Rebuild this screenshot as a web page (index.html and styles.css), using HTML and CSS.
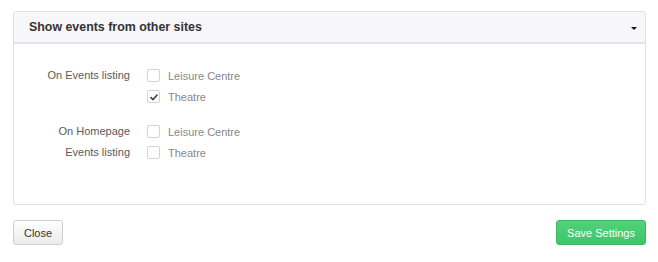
FILE: index.html
```html
<!DOCTYPE html>
<html lang="en">
<head>
    <meta charset="UTF-8">
    <title>Event Settings</title>
    <link rel="stylesheet" href="styles.css">
</head>
<body>

<div class="settings">
    <!-- Panel -->
    <div class="panel">
        <div class="panel-heading">
            <h3>Show events from other sites</h3>
            <span class="caret"></span>
        </div>
        <div class="panel-body">
            <div class="form-group">
                <div class="group-label">On Events listing</div>
                <div class="options">
                    <label class="option"><span class="box"></span>Leisure Centre</label>
                    <label class="option"><span class="box checked">
                        <svg width="10" height="10" viewBox="0 0 10 10"><path d="M1.5 5.2 L4 7.5 L8.5 2.5" fill="none" stroke="#444" stroke-width="1.6"/></svg>
                    </span>Theatre</label>
                </div>
            </div>
            <div class="form-group">
                <div class="group-label">On Homepage<br>Events listing</div>
                <div class="options">
                    <label class="option"><span class="box"></span>Leisure Centre</label>
                    <label class="option"><span class="box"></span>Theatre</label>
                </div>
            </div>
        </div>
    </div>

    <!-- Footer buttons -->
    <div class="actions">
        <button class="btn btn-default">Close</button>
        <button class="btn btn-success">Save Settings</button>
    </div>
</div>

</body>
</html>
```

FILE: styles.css
```css
/* General */
body {
    font-family: "Liberation Sans", Arial, sans-serif;
    font-size: 11px;
    margin: 0;
    padding: 0;
    background-color: #fff;
    color: #555;
}

.settings {
    padding: 11px 12px 0 13px;
}

/* Panel */
.panel {
    border: 1px solid #e2e0e4;
    border-radius: 3px;
    height: 194px;
    box-sizing: border-box;
}

.panel-heading {
    display: flex;
    align-items: center;
    justify-content: space-between;
    height: 30px;
    padding: 0 8px 0 15px;
    background-color: #f7f6f9;
    border-bottom: 2px solid #e4e3e6;
    border-radius: 3px 3px 0 0;
}

.panel-heading h3 {
    margin: 0;
    font-size: 12.4px;
    font-weight: bold;
    color: #333;
}

.caret {
    width: 0;
    height: 0;
    margin-top: 3px;
    border-left: 3px solid transparent;
    border-right: 3px solid transparent;
    border-top: 3px solid #111;
}

.panel-body {
    padding: 21px 0 0 0;
}

/* Form rows */
.form-group {
    display: flex;
    gap: 17px;
    margin-bottom: 14px;
}

.group-label {
    width: 116px;
    text-align: right;
    line-height: 21px;
    color: #5a5a5a;
}

.options {
    display: flex;
    flex-direction: column;
}

.option {
    display: flex;
    align-items: center;
    height: 21px;
    color: #888;
}

.box {
    display: flex;
    align-items: center;
    justify-content: center;
    width: 11px;
    height: 11px;
    margin-right: 8px;
    border: 1px solid #d4d4d4;
    border-radius: 2px;
    background-color: #fff;
}

/* Buttons */
.actions {
    display: flex;
    justify-content: space-between;
    margin-top: 15px;
}

.btn {
    font-family: inherit;
    font-size: 11px;
    height: 25px;
    border-radius: 3px;
    cursor: pointer;
}

.btn-default {
    width: 50px;
    color: #333;
    background: linear-gradient(#fff, #ebebeb);
    border: 1px solid #d0d0d0;
}

.btn-success {
    width: 90px;
    color: #fff;
    background: linear-gradient(#52d27a, #3ec56a);
    border: 1px solid #3ab862;
}
```
